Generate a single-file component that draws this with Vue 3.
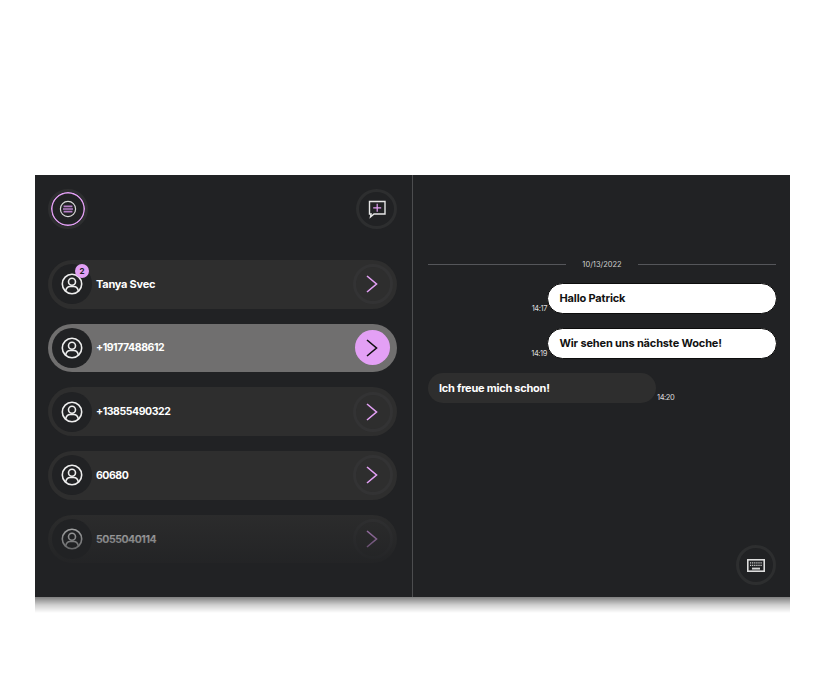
<script setup>
const contacts = [
  { name: 'Tanya Svec', badge: 2 },
  { name: '+19177488612', active: true, num: true },
  { name: '+13855490322', num: true },
  { name: '60680', num: true },
  { name: '5055040114', num: true },
]
const messages = [
  { text: 'Hallo Patrick', time: '14:17', out: true },
  { text: 'Wir sehen uns nächste Woche!', time: '14:19', out: true },
  { text: 'Ich freue mich schon!', time: '14:20', out: false },
]
</script>

<template>
  <div class="page">
    <div class="panel">
      <section class="left">
        <header class="top">
          <button class="round menu">
            <svg width="18" height="18" viewBox="0 0 18 18" fill="none">
              <circle cx="9" cy="9" r="7.6" stroke="#d8d8d8" stroke-width="1.2" />
              <path d="M4.6 6.4h8.8M4 9h10M4.6 11.6h8.8" stroke="#b57fc6" stroke-width="1.7" />
            </svg>
          </button>
          <button class="round add">
            <svg width="20" height="20" viewBox="0 0 20 20" fill="none">
              <path d="M2.5 2.5h15.5v12.5H7l-3.5 3 .6-3H2.5z" stroke="#e6e6e6" stroke-width="1.4" stroke-linejoin="miter" />
              <path d="M10.2 4.8v8M6.2 8.8h8" stroke="#e3a0f5" stroke-width="1.2" />
            </svg>
          </button>
        </header>

        <ul class="list">
          <li v-for="c in contacts" :key="c.name" class="row" :class="{ active: c.active }">
            <div class="avatar">
              <svg width="22" height="22" viewBox="0 0 22 22" fill="none" stroke="#eeeeee" stroke-width="1.6">
                <circle cx="11" cy="11" r="9.7" />
                <circle cx="11" cy="8.7" r="3.5" />
                <path d="M4.6 18.1c.6-3 2.8-4.6 4.6-4.6h3.6c1.8 0 4 1.6 4.6 4.6" />
              </svg>
              <span v-if="c.badge" class="badge">{{ c.badge }}</span>
            </div>
            <span class="name" :class="{ num: c.num }">{{ c.name }}</span>
            <div class="go">
              <svg width="14" height="20" viewBox="0 0 14 20" fill="none">
                <path d="M1 2l9.5 8L1 18" stroke-width="1.6" />
              </svg>
            </div>
          </li>
        </ul>
        <div class="fade"></div>
      </section>

      <section class="right">
        <div class="date"><i></i><span>10/13/2022</span><i></i></div>
        <div class="thread">
          <div v-for="m in messages" :key="m.time" class="msg" :class="m.out ? 'out' : 'in'">
            <time>{{ m.time }}</time>
            <p>{{ m.text }}</p>
          </div>
        </div>
        <footer class="bottom">
          <button class="round">
            <svg width="18" height="13" viewBox="0 0 18 13" fill="none">
              <rect x=".8" y=".8" width="16.4" height="11.4" stroke="#dddddd" stroke-width="1.6" />
              <path d="M3 3.8h12M3 6.4h12" stroke="#d4d4d4" stroke-width="1.3" stroke-dasharray="1.2 .9" />
              <path d="M5 9.6h8" stroke="#d4d4d4" stroke-width="1.9" />
            </svg>
          </button>
        </footer>
      </section>
    </div>
    <div class="reflection"></div>
  </div>
</template>

<style scoped>
.page {
  padding: 175px 35px 0;
  font-family: Inter, "Open Sans", sans-serif;
}
.panel {
  display: flex;
  height: 422px;
  background: #212224;
  color: #fff;
}
.reflection {
  height: 16px;
  background: linear-gradient(#7f7f7f, #cfcfcf 50%, #fff);
}
.left {
  position: relative;
  width: 378px;
  flex: none;
  box-sizing: border-box;
  padding: 14px 15px 0 13px;
  border-right: 1px solid #4c4d4f;
}
.top {
  display: flex;
  justify-content: space-between;
  margin-bottom: 31px;
}
.round {
  display: flex;
  align-items: center;
  justify-content: center;
  width: 40px;
  height: 40px;
  box-sizing: border-box;
  padding: 0;
  border: 3px solid #2d2e2f;
  border-radius: 50%;
  background: transparent;
}
.add {
  width: 41px;
}
.menu {
  background: #212224;
  box-shadow: inset 0 0 0 1.5px #e3a0f5;
}
.list {
  list-style: none;
  margin: 0;
  padding: 0;
  display: flex;
  flex-direction: column;
  gap: 15.2px;
}
.row {
  display: flex;
  align-items: center;
  height: 48.5px;
  box-sizing: border-box;
  padding: 0 4px;
  border-radius: 25px;
  background: #2e2e2e;
}
.row.active {
  background: #706f6f;
}
.avatar {
  position: relative;
  display: flex;
  align-items: center;
  justify-content: center;
  width: 40px;
  height: 40px;
  border-radius: 50%;
  background: #212224;
}
.badge {
  position: absolute;
  top: 0;
  right: 3px;
  width: 14px;
  height: 14px;
  border-radius: 50%;
  background: #e3a0f5;
  color: #1d1d1d;
  font-size: 8px;
  font-weight: 700;
  line-height: 14px;
  text-align: center;
}
.name {
  flex: 1;
  margin-left: 4px;
  font-size: 11px;
  font-weight: 700;
  letter-spacing: -0.25px;
}
.name.num {
  font-size: 10.5px;
  letter-spacing: -0.45px;
}
.go {
  display: flex;
  align-items: center;
  justify-content: center;
  width: 40px;
  height: 40px;
  box-sizing: border-box;
  border: 3px solid #333334;
  border-radius: 50%;
  stroke: #e3a0f5;
}
.go svg {
  stroke: inherit;
}
.active .go {
  width: 35px;
  height: 35px;
  margin-right: 3px;
  border: 0;
  background: #e3a0f5;
  stroke: #111;
}
.fade {
  position: absolute;
  left: 0;
  right: 0;
  top: 325px;
  height: 75px;
  background: linear-gradient(rgba(33, 34, 36, 0), #212224);
  pointer-events: none;
}
.right {
  flex: 1;
  display: flex;
  flex-direction: column;
  padding: 0 14px 12px 15px;
  min-width: 0;
}
.date {
  display: flex;
  align-items: center;
  gap: 16px;
  height: 16px;
  margin-top: 81px;
  font-size: 7.5px;
  color: #cfcfcf;
}
.date i {
  flex: 1;
  height: 1px;
  background: #55565a;
}
.thread {
  display: flex;
  flex-direction: column;
  gap: 14px;
  margin-top: 11px;
}
.msg {
  display: flex;
  align-items: flex-end;
}
.msg.out {
  justify-content: flex-end;
  margin-right: -1px;
}
.msg.in {
  flex-direction: row-reverse;
  justify-content: flex-end;
}
.msg p {
  margin: 0;
  box-sizing: border-box;
  height: 31px;
  border-radius: 16px;
  font-size: 11px;
  font-weight: 700;
  letter-spacing: -0.15px;
}
.out p {
  width: 230px;
  padding: 0 12px 0 11.5px;
  background: #fff;
  color: #111;
  border: 1px solid #0d0d0d;
  line-height: 29px;
}
.in p {
  width: 228px;
  height: 30px;
  padding: 0 11px;
  background: #2e2e2e;
  color: #fff;
  line-height: 30px;
  letter-spacing: -0.25px;
}
time {
  font-size: 7.5px;
  letter-spacing: -0.4px;
  color: #dddddd;
  line-height: 10px;
}
.in time {
  margin-left: 1px;
}
.bottom {
  margin-top: auto;
  display: flex;
  justify-content: flex-end;
}
</style>

<style>
html, body {
  background: #fff;
}
</style>
